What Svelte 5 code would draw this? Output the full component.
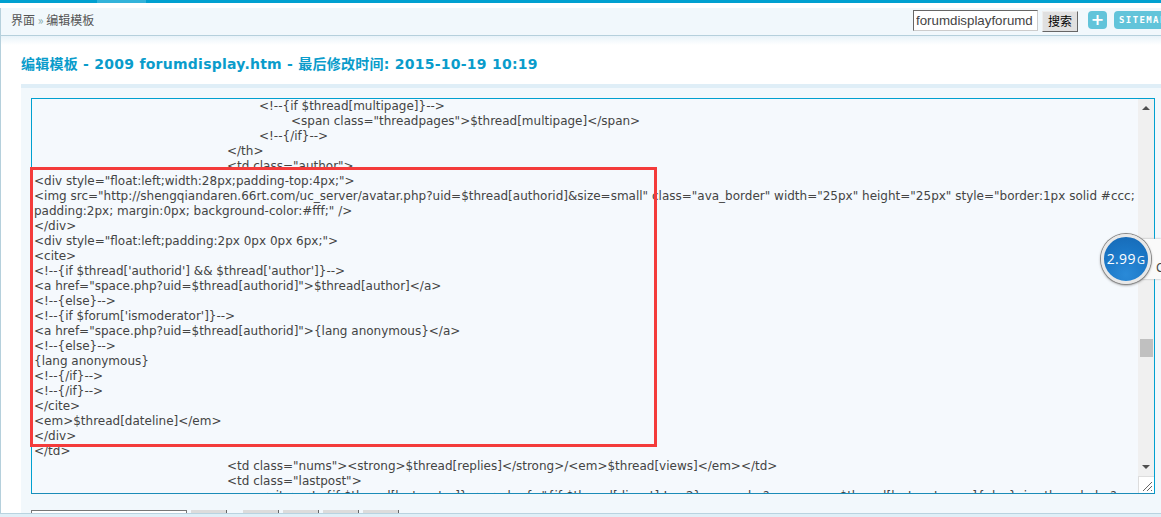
<script>
  const lines = [
    { t: 2, s: '<!--{if $thread[multipage]}-->' },
    { t: 3, s: '<span class="threadpages">$thread[multipage]</span>' },
    { t: 2, s: '<!--{/if}-->' },
    { t: 1, s: '</th>' },
    { t: 1, s: '<td class="author">' },
    { t: 0, s: '<div style="float:left;width:28px;padding-top:4px;">' },
    { t: 0, s: '<img src="http://shengqiandaren.66rt.com/uc_server/avatar.php?uid=$thread[authorid]&size=small" class="ava_border" width="25px" height="25px" style="border:1px solid #ccc;' },
    { t: 0, s: 'padding:2px; margin:0px; background-color:#fff;" />' },
    { t: 0, s: '</div>' },
    { t: 0, s: '<div style="float:left;padding:2px 0px 0px 6px;">' },
    { t: 0, s: '<cite>' },
    { t: 0, s: "<!--{if $thread['authorid'] && $thread['author']}-->" },
    { t: 0, s: '<a href="space.php?uid=$thread[authorid]">$thread[author]</a>' },
    { t: 0, s: '<!--{else}-->' },
    { t: 0, s: "<!--{if $forum['ismoderator']}-->" },
    { t: 0, s: '<a href="space.php?uid=$thread[authorid]">{lang anonymous}</a>' },
    { t: 0, s: '<!--{else}-->' },
    { t: 0, s: '{lang anonymous}' },
    { t: 0, s: '<!--{/if}-->' },
    { t: 0, s: '<!--{/if}-->' },
    { t: 0, s: '</cite>' },
    { t: 0, s: '<em>$thread[dateline]</em>' },
    { t: 0, s: '</div>' },
    { t: 0, s: '</td>' },
    { t: 1, s: '<td class="nums"><strong>$thread[replies]</strong>/<em>$thread[views]</em></td>' },
    { t: 1, s: '<td class="lastpost">' },
    { t: 2, s: '<cite><!--{if $thread[lastposter]}--><a href="{if $thread[digest] != -2}space.php?username=$thread[lastposterenc]{else}viewthread.php?' }
  ];
  const indent = ['i0', 'i1', 'i2', 'i3'];
</script>

<div class="page">
  <div class="topbar"><span class="toptab"></span></div>
  <div class="nav">
    <div class="crumbs">界面 <span class="sep">»</span> 编辑模板</div>
    <div class="tools">
      <input class="search" value="forumdisplayforumd" />
      <button class="go">搜索</button>
      <span class="plus">+</span>
      <span class="sitemap">SITEMAP</span>
    </div>
  </div>
  <div class="body">
    <h1>编辑模板 - 2009 forumdisplay.htm - 最后修改时间: 2015-10-19 10:19</h1>
    <div class="panel">
      <div class="editor">
        <div class="code">
          {#each lines as l}
            <div class="line {indent[l.t]}">{l.s}</div>
          {/each}
        </div>
        <div class="scroll">
          <span class="up"></span>
          <span class="track"><span class="thumb"></span></span>
          <span class="down"></span>
          <span class="grip">
            <svg width="14" height="14" viewBox="0 0 14 14"><path d="M3 12 12 3M7 12 12 7M11 12 12 11" stroke="#666" fill="none" /></svg>
          </span>
        </div>
      </div>
      <div class="actions">
        <span class="field"></span>
        <span class="btn b1"></span>
        <span class="btn"></span>
        <span class="btn"></span>
        <span class="btn"></span>
        <span class="btn"></span>
      </div>
    </div>
  </div>
  <div class="foot"></div>
  <div class="redbox"></div>
  <div class="side"><span>C</span></div>
  <div class="ball">2.99<small>G</small></div>
</div>

<style>
  :global(html), :global(body) {
    margin: 0;
    height: 517px;
    overflow: hidden;
  }
  .page {
    position: relative;
    width: 1161px;
    height: 517px;
    overflow: hidden;
    background: #fff;
    display: flex;
    flex-direction: column;
    font-family: "DejaVu Sans", "Noto Sans CJK SC", sans-serif;
  }
  .topbar {
    height: 3px;
    background: #00a0d0;
    margin-bottom: 5px;
    flex: none;
    display: flex;
    padding-left: 97px;
  }
  .toptab {
    width: 49px;
    background: #33b3da;
  }
  .nav {
    flex: none;
    height: 27px;
    box-sizing: content-box;
    border-bottom: 1px solid #b5d0dc;
    border-left: 1px solid #b5d0dc;
    background: #f1f8fc;
    display: flex;
    align-items: center;
    justify-content: space-between;
  }
  .crumbs {
    padding: 0 0 3px 10px;
    font: 12px/16px "Noto Sans CJK SC", sans-serif;
    color: #555;
  }
  .sep {
    color: #8aa;
  }
  .tools {
    display: flex;
    align-items: flex-start;
    width: 248px;
    padding-top: 1px;
    overflow: hidden;
    flex: none;
    height: 26px;
    box-sizing: border-box;
  }
  .search {
    box-sizing: border-box;
    width: 125px;
    height: 21px;
    border-style: solid;
    border-width: 1px;
    border-color: #666 #ccc #ccc #666;
    background: #fff;
    padding: 0 2px;
    font: 13.3px "Liberation Sans", sans-serif;
    color: #444;
    flex: none;
  }
  .go {
    box-sizing: border-box;
    width: 36px;
    height: 21px;
    margin: 1px 10px 0 4px;
    padding: 0;
    background: #e0e0e0;
    border-style: solid;
    border-width: 1px;
    border-color: #eee #666 #666 #eee;
    font: 12px/18px "Noto Sans CJK SC", sans-serif;
    color: #000;
    flex: none;
  }
  .plus {
    flex: none;
    width: 19px;
    height: 18px;
    margin: 1px 7px 0 0;
    border-radius: 4px;
    background: #62c4da;
    color: #fff;
    font: bold 16px/17px "DejaVu Sans", sans-serif;
    text-align: center;
  }
  .sitemap {
    flex: none;
    height: 18px;
    margin-top: 1px;
    padding: 0 5px;
    border-radius: 4px;
    background: #62c4da;
    color: #fff;
    font: bold 9px/18px "DejaVu Sans Mono", monospace;
    letter-spacing: 1.4px;
  }
  .body {
    flex: 1;
    min-height: 0;
    display: flex;
    flex-direction: column;
    border-left: 1px solid #b5d0dc;
    padding-left: 20px;
    background: linear-gradient(#e8f3f9, #fff 9px);
  }
  h1 {
    margin: 0;
    padding-top: 18px;
    height: 30px;
    font: bold 14px/20px "DejaVu Sans", "Noto Sans CJK SC", sans-serif;
    letter-spacing: 0.25px;
    color: #0a9ccb;
    flex: none;
  }
  .panel {
    flex: 1;
    min-height: 0;
    background: #f2f8fc;
    border-top: 4px solid #dfeef7;
    padding: 10px 6px 0 10px;
  }
  .editor {
    box-sizing: border-box;
    height: 396px;
    width: 1124px;
    border: 1px solid #00a0d0;
    border-bottom-color: #1c8cb8;
    background: #f5f9fd;
    display: flex;
    overflow: hidden;
  }
  .code {
    flex: 1;
    min-width: 0;
    overflow: hidden;
    padding: 0 0 0 2px;
    font: 12px/15px "DejaVu Sans", sans-serif;
    color: #444;
  }
  .line {
    white-space: pre;
    height: 15px;
  }
  .i1 { padding-left: 193px; }
  .i2 { padding-left: 225px; }
  .i3 { padding-left: 257px; }
  .scroll {
    flex: none;
    width: 16px;
    background: #f0f0f0;
    display: flex;
    flex-direction: column;
    align-items: center;
  }
  .up, .down {
    flex: none;
    width: 0;
    height: 0;
    border-left: 4px solid transparent;
    border-right: 4px solid transparent;
  }
  .up {
    margin-top: 7px;
    border-bottom: 4px solid #505050;
  }
  .down {
    margin-bottom: 7px;
    border-top: 4px solid #505050;
  }
  .track {
    flex: 1;
    width: 100%;
    padding-top: 229px;
    box-sizing: border-box;
  }
  .thumb {
    display: block;
    width: 13px;
    height: 18px;
    margin-left: 2px;
    background: #c0c0c0;
  }
  .grip {
    flex: none;
    width: 100%;
    height: 17px;
    box-sizing: border-box;
    background: #fff;
    border-top: 1px solid #ddd;
    border-left: 1px solid #ddd;
    display: flex;
    justify-content: flex-end;
    align-items: flex-end;
  }
  .grip svg { display: block; }
  .actions {
    display: flex;
    margin-top: 16px;
    height: 3px;
    align-items: flex-start;
  }
  .field {
    width: 156px;
    height: 3px;
    box-sizing: border-box;
    border: 1px solid #777;
    border-bottom: 0;
    background: #fff;
    margin-right: 4px;
  }
  .btn {
    box-sizing: border-box;
    width: 36px;
    height: 3px;
    background: #dcdcdc;
    border-right: 1px solid #666;
    margin-right: 4px;
  }
  .b1 { margin-right: 16px; }
  .foot {
    flex: none;
    height: 3px;
    background: #e0eff7;
    border-top: 1px solid #b9d3e0;
  }
  .redbox {
    position: absolute;
    left: 30px;
    top: 167px;
    width: 621px;
    height: 274px;
    border: 3px solid #f43b3b;
  }
  .side {
    position: absolute;
    left: 1136px;
    top: 239px;
    width: 25px;
    height: 40px;
    background: #fafafa;
    box-shadow: 0 0 2px #aaa;
    font: 12px/16px "Noto Sans", sans-serif;
    color: #444;
  }
  .side span {
    position: absolute;
    left: 20px;
    top: 21px;
  }
  .ball {
    position: absolute;
    left: 1101px;
    top: 234px;
    width: 44px;
    height: 44px;
    border: 3px solid #e8e8e8;
    border-radius: 50%;
    background: radial-gradient(circle at 50% 85%, #2a8ad8, #1a75c4 60%, #1668b4);
    box-shadow: 0 0 0 1px #888, 0 1px 3px #666;
    color: #fff;
    font: 14px/44px "Open Sans", sans-serif;
    letter-spacing: 0.4px;
    text-align: center;
    white-space: nowrap;
  }
  .ball small {
    font-size: 11px;
    margin-left: 1px;
  }
</style>
